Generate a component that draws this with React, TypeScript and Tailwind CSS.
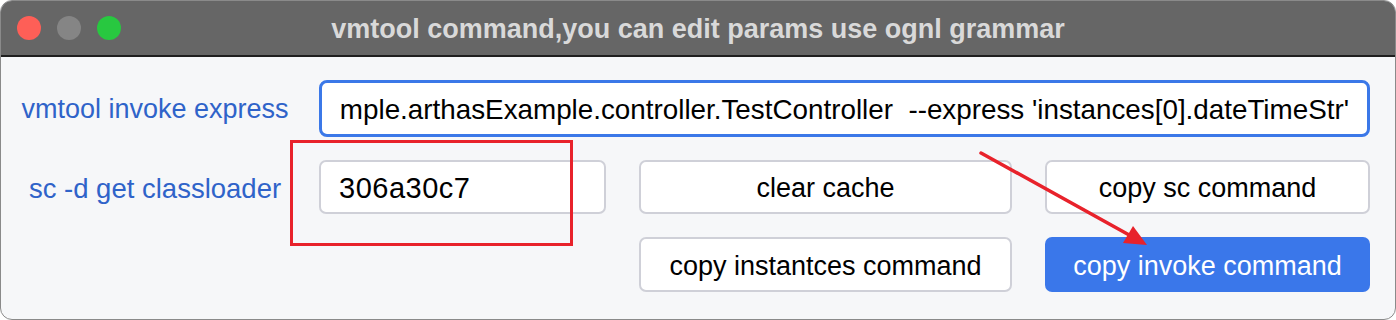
import React from "react";

const font = { fontFamily: '"Liberation Sans", Arial, sans-serif' };

function TrafficLights() {
  return (
    <div className="flex items-center gap-4 pl-4">
      <span className="h-6 w-6 rounded-full bg-[#fe5f57]" />
      <span className="h-6 w-6 rounded-full bg-[#858585]" />
      <span className="h-6 w-6 rounded-full bg-[#28c840]" />
    </div>
  );
}

const btn =
  "flex items-center justify-center rounded-[7px] border-2 border-[#cfd0d8] bg-white pt-[3px] text-[27px] text-black";

const label =
  "flex items-center justify-center whitespace-nowrap pl-[23px] pt-[3px] text-[#2f63c9]";

export default function App() {
  return (
    <div className="h-[320px] w-full bg-white" style={font}>
      <div className="relative flex h-[320px] flex-col overflow-hidden rounded-[12px] border border-[#8a8a8a] bg-[#f6f7f9]">
        {/* title bar */}
        <div className="relative flex h-[56px] shrink-0 items-center border-b-2 border-[#1f1f1f] bg-[#666666]">
          <TrafficLights />
          <div className="absolute inset-0 flex items-center justify-center pt-[2px] text-[27px] font-bold text-[#d9d9d9]">
            vmtool command,you can edit params use ognl grammar
          </div>
        </div>

        {/* form */}
        <div className="grid grid-cols-[285px_287px_373px_325px] gap-x-[33px] gap-y-[23px] pt-[23px]">
          <div className={`${label} h-[56px] text-[27px]`}>vmtool invoke express</div>
          <div className="col-span-3 flex h-[57px] items-center justify-end overflow-hidden whitespace-pre rounded-[8px] border-[3px] border-[#3b78e8] bg-white px-[18px] pt-[3px] text-[27.8px] text-black">
            mple.arthasExample.controller.TestController  --express 'instances[0].dateTimeStr'
          </div>

          <div className={`${label} h-[54px] text-[27.5px]`}>sc -d get classloader</div>
          <div className="flex h-[54px] items-center rounded-[7px] border-2 border-[#cfd0d8] bg-white px-[18px] pt-[3px] text-[29px] tracking-[0.5px] text-black">
            306a30c7
          </div>
          <div className={`${btn} h-[54px]`}>clear cache</div>
          <div className={`${btn} h-[54px]`}>copy sc command</div>

          <div className={`${btn} col-start-3 h-[55px]`}>copy instantces command</div>
          <div className="flex h-[55px] items-center justify-center rounded-[7px] bg-[#3a77ea] pt-[3px] text-[27px] text-white">
            copy invoke command
          </div>
        </div>

        {/* red annotations */}
        <div className="pointer-events-none absolute left-[289px] top-[139px] h-[106px] w-[283px] border-[3px] border-[#e8222b]" />
        <svg className="pointer-events-none absolute left-0 top-0" width="1396" height="320">
          <line x1="980" y1="152" x2="1130" y2="235" stroke="#e8222b" strokeWidth="3.5" strokeLinecap="round" />
          <polygon points="1146,244 1122,242 1132,225" fill="#e8222b" />
        </svg>
      </div>
    </div>
  );
}
